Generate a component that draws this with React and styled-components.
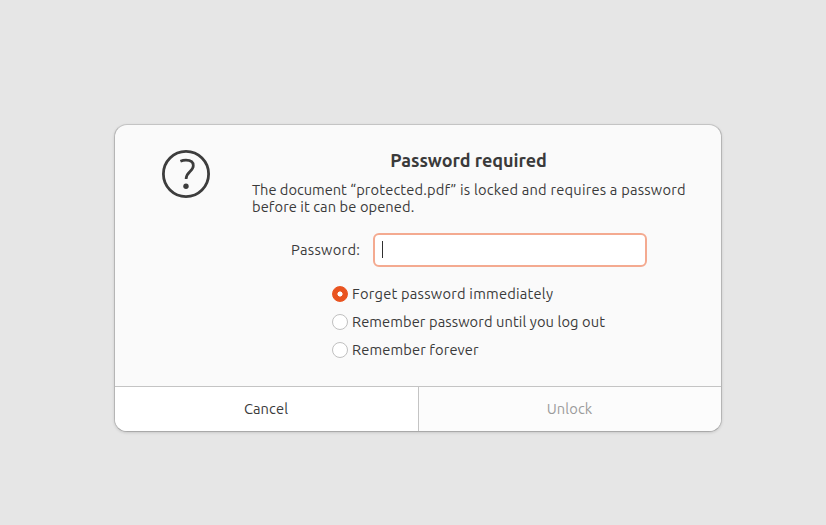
import React from "react";
import styled, { createGlobalStyle } from "styled-components";

const GlobalStyle = createGlobalStyle`
  * { box-sizing: border-box; }
  body {
    margin: 0;
    background: #e6e6e6;
    color: #3a3a3a;
    font: 14.667px/17px Ubuntu, "Noto Sans", sans-serif;
  }
`;

const Desktop = styled.main`
  width: 826px;
  height: 525px;
  padding: 124px 104px 0 114px;
  overflow: hidden;
`;

const Dialog = styled.section`
  display: flex;
  flex-direction: column;
  width: 608px;
  height: 308px;
  border: 1px solid #b5b5b5;
  border-top-color: #c4c4c4;
  border-bottom-color: #a9a9a9;
  border-radius: 13px;
  background: #fafafa;
  box-shadow: 0 1px 3px rgba(0, 0, 0, 0.13);
  overflow: hidden;
`;

const Content = styled.div`
  display: flex;
  height: 261px;
  padding: 25px 35px 0 47px;
`;

const QuestionIcon = styled.svg`
  flex: none;
  width: 48px;
  height: 48px;
  margin-right: 42px;
`;

const Form = styled.form`
  width: 434px;
`;

const Label = styled.span`
  white-space: nowrap;
  letter-spacing: ${(p) => p.$tracking || 0}px;
`;

const Title = styled.h1`
  height: 31px;
  margin: 0;
  padding-right: 1px;
  text-align: center;
  font-size: 18px;
  line-height: 21px;
  font-weight: 700;
  letter-spacing: -0.03px;
`;

const Message = styled.p`
  height: 52px;
  margin: 0;
  white-space: nowrap;
`;

const PasswordRow = styled.label`
  display: flex;
  align-items: center;
  height: 34px;
  padding-left: 39px;

  > ${Label} { margin-bottom: 2px; }
`;

const Entry = styled.span`
  display: flex;
  align-items: center;
  width: 274px;
  height: 34px;
  margin-left: auto;
  margin-right: 39px;
  padding: 0 0 1px 7px;
  border: 2px solid #f4aa90;
  border-radius: 6px;
  background: #fff;
`;

const Caret = styled.span`
  width: 1px;
  height: 17px;
  background: #303030;
`;

const Options = styled.div`
  padding: 13px 0 0 80px;
`;

const Option = styled.label`
  display: flex;
  align-items: center;
  gap: 4px;
  height: 28px;

  > ${Label} { margin-bottom: 2px; }
`;

const Radio = styled.span`
  flex: none;
  width: 16px;
  height: 16px;
  border: 1px solid ${(p) => (p.$checked ? "#e95420" : "#c0c0c0")};
  border-radius: 50%;
  background: ${(p) =>
    p.$checked ? "radial-gradient(circle, #fff 2.2px, #e95420 2.9px)" : "#fff"};
`;

const Actions = styled.footer`
  display: grid;
  grid-template-columns: 303px 1fr;
  height: 45px;
  border-top: 1px solid #c4c4c4;
`;

const Action = styled.button`
  margin: 0;
  padding: 0 1px 2px 0;
  border: 0;
  border-left: ${(p) => (p.disabled ? "1px solid #c4c4c4" : "0")};
  background: ${(p) => (p.disabled ? "#fcfcfc" : "#fff")};
  color: ${(p) => (p.disabled ? "#9b9b9b" : "#3a3a3a")};
  font: inherit;
  letter-spacing: 0.1px;
`;

const choices = [
  { text: "Forget password immediately", tracking: 0.23, checked: true },
  { text: "Remember password until you log out", tracking: 0.09 },
  { text: "Remember forever", tracking: 0.13 },
];

export default function App() {
  return (
    <>
      <GlobalStyle />
      <Desktop>
        <Dialog role="dialog">
          <Content>
            <QuestionIcon viewBox="0 0 48 48" fill="none" stroke="#3d3d3d">
              <circle cx="24" cy="24" r="22.6" strokeWidth="2.8" />
              <path d="M18.4 11.3C20 10.6 22 10.2 24 10.2C28.6 10.2 31.3 12.2 31.3 15.7C31.3 21.4 24.1 21.8 24.1 29" strokeWidth="2.7" />
              <circle cx="24" cy="36.3" r="2.7" fill="#3d3d3d" stroke="none" />
            </QuestionIcon>
            <Form>
              <Title>Password required</Title>
              <Message>
                <Label $tracking={-0.03}>The document </Label>
                <Label $tracking={0.15}>“protected.pdf” </Label>
                <Label $tracking={0.21}>is locked and requires a password</Label>
                <br />
                <Label $tracking={0.08}>before it can be opened.</Label>
              </Message>
              <PasswordRow>
                <Label $tracking={0.3}>Password:</Label>
                <Entry><Caret /></Entry>
              </PasswordRow>
              <Options>
                {choices.map((c) => (
                  <Option key={c.text}>
                    <Radio $checked={c.checked} />
                    <Label $tracking={c.tracking}>{c.text}</Label>
                  </Option>
                ))}
              </Options>
            </Form>
          </Content>
          <Actions>
            <Action type="button">Cancel</Action>
            <Action type="button" disabled>Unlock</Action>
          </Actions>
        </Dialog>
      </Desktop>
    </>
  );
}
